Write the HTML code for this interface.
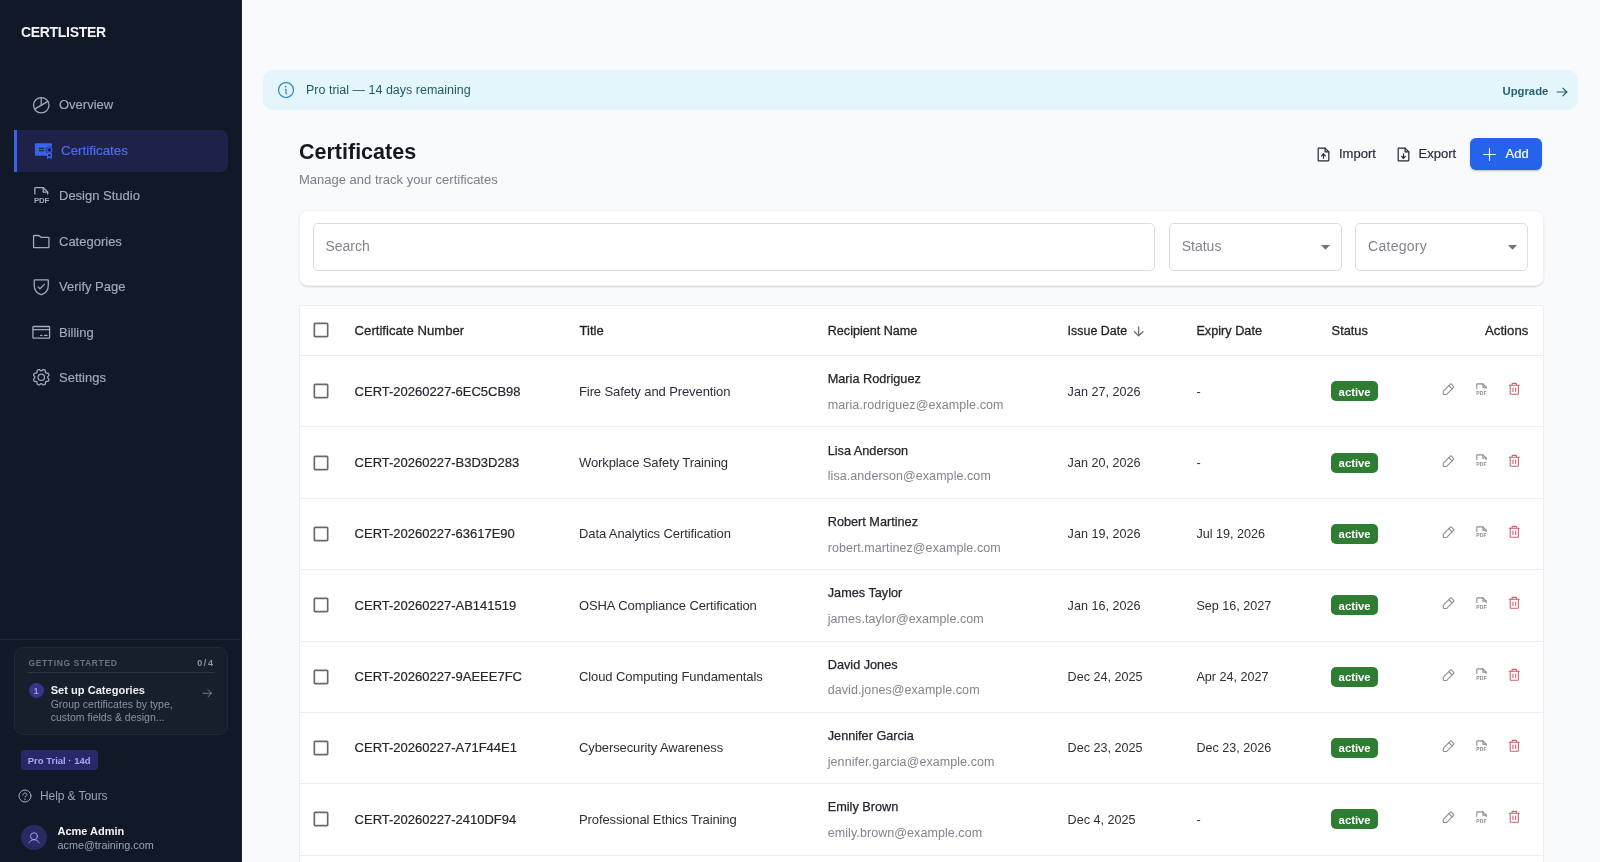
<!DOCTYPE html><html><head><meta charset="utf-8"><style>
*{box-sizing:border-box;margin:0;padding:0}
html,body{width:1600px;height:862px;overflow:hidden;background:#f8fafc;font-family:"Liberation Sans",sans-serif}
.t{position:absolute;line-height:1;white-space:nowrap}
#w{position:absolute;left:0;top:0;width:1600px;height:862px;will-change:transform}
.a{position:absolute}
svg{position:absolute;overflow:visible}
.med{-webkit-text-stroke:0.25px currentColor}
</style></head><body><div id="w">
<div class="a" style="left:0;top:0;width:242px;height:862px;background:#111827;border-right:1px solid #1c2333"></div>
<div class="t" style="left:21px;top:25px;font-size:14px;color:#f3f4f6;font-weight:700;letter-spacing:-0.32px">CERTLISTER</div>
<div class="a" style="left:14px;top:130px;width:214px;height:42px;background:#1e2249;border-radius:0 8px 8px 0;border-left:3px solid #3b63e8"></div>
<div class="t" style="left:59px;top:98px;font-size:13px;color:#a3aab8;font-weight:400;-webkit-text-stroke:0.15px #a3aab8">Overview</div>
<div class="t" style="left:61px;top:144px;font-size:13.4px;color:#4c6ef5;font-weight:400;-webkit-text-stroke:0.15px #4c6ef5">Certificates</div>
<div class="t" style="left:59px;top:189px;font-size:13px;color:#a3aab8;font-weight:400;-webkit-text-stroke:0.15px #a3aab8">Design Studio</div>
<div class="t" style="left:59px;top:235px;font-size:13px;color:#a3aab8;font-weight:400;-webkit-text-stroke:0.15px #a3aab8">Categories</div>
<div class="t" style="left:59px;top:280px;font-size:13px;color:#a3aab8;font-weight:400;-webkit-text-stroke:0.15px #a3aab8">Verify Page</div>
<div class="t" style="left:59px;top:326px;font-size:13px;color:#a3aab8;font-weight:400;-webkit-text-stroke:0.15px #a3aab8">Billing</div>
<div class="t" style="left:59px;top:371px;font-size:13px;color:#a3aab8;font-weight:400;-webkit-text-stroke:0.15px #a3aab8">Settings</div>
<svg style="left:31.25px;top:94.65px" width="20.5" height="20.5" viewBox="0 0 256 256" fill="none" stroke="#a3aab8" stroke-width="16" stroke-linecap="round" stroke-linejoin="round" ><circle cx="128" cy="128" r="96"/><line x1="128" y1="128" x2="128" y2="32"/><line x1="211.14" y1="80" x2="44.86" y2="176"/></svg>
<svg style="left:33.05px;top:140.05px" width="20.5" height="20.5" viewBox="0 0 256 256"><rect x="24" y="41" width="212" height="157" rx="12" fill="#3b63e8"/><path d="M80 104H132M80 133H132" stroke="#1e2249" stroke-width="15" stroke-linecap="round"/><circle cx="204" cy="126" r="46" fill="#1e2249"/><path d="M174 160V240L205 222L236 240V160Z" fill="#3b63e8"/><path d="M190 176V208L205 199L220 208V176Z" fill="#1e2249"/><circle cx="204" cy="124" r="31" fill="#1e2249" stroke="#3b63e8" stroke-width="14"/></svg><svg style="left:31.25px;top:185.45px" width="20.5" height="20.5" viewBox="0 0 256 256" fill="none" stroke="#a3aab8" stroke-width="16" stroke-linecap="round" stroke-linejoin="round" ><path d="M48,112V40a8,8,0,0,1,8-8h96l56,56v24"/><polyline points="152 32 152 88 208 88"/></svg>
<div class="t" style="left:34px;top:197px;font-size:7.8px;color:#a3aab8;font-weight:700;letter-spacing:-0.15px">PDF</div>
<svg style="left:31.25px;top:230.85px" width="20.5" height="20.5" viewBox="0 0 256 256" fill="none" stroke="#a3aab8" stroke-width="16" stroke-linecap="round" stroke-linejoin="round" ><path d="M216.89,208H39.38A7.4,7.4,0,0,1,32,200.62V64a8,8,0,0,1,8-8H93.33a8,8,0,0,1,4.8,1.6l27.74,20.8a8,8,0,0,0,4.8,1.6H216a8,8,0,0,1,8,8V200.89A7.11,7.11,0,0,1,216.89,208Z"/></svg>
<svg style="left:31.25px;top:276.25px" width="20.5" height="20.5" viewBox="0 0 256 256" fill="none" stroke="#a3aab8" stroke-width="16" stroke-linecap="round" stroke-linejoin="round" ><path d="M40,114.79V56a8,8,0,0,1,8-8H208a8,8,0,0,1,8,8v58.77c0,84.18-71.31,112.07-85.54,116.8a7.54,7.54,0,0,1-4.92,0C111.31,226.86,40,199,40,114.79Z"/><polyline points="88 136 112 160 168 104"/></svg>
<svg style="left:31.25px;top:321.65px" width="20.5" height="20.5" viewBox="0 0 256 256" fill="none" stroke="#a3aab8" stroke-width="16" stroke-linecap="round" stroke-linejoin="round" ><rect x="24" y="56" width="208" height="144" rx="8"/><line x1="168" y1="168" x2="200" y2="168"/><line x1="120" y1="168" x2="136" y2="168"/><line x1="24" y1="96" x2="232" y2="96"/></svg>
<svg style="left:31.25px;top:367.05px" width="20.5" height="20.5" viewBox="0 0 256 256" fill="none" stroke="#a3aab8" stroke-width="16" stroke-linecap="round" stroke-linejoin="round" ><circle cx="128" cy="128" r="40"/><path d="M41.43,178.09A99.14,99.14,0,0,1,31.36,153.8l16.78-21a81.59,81.59,0,0,1,0-9.64l-16.77-21a99.43,99.43,0,0,1,10.05-24.3l26.71-3a81,81,0,0,1,6.81-6.81l3-26.7A99.14,99.14,0,0,1,102.2,31.36l21,16.78a81.59,81.59,0,0,1,9.64,0l21-16.77a99.43,99.43,0,0,1,24.3,10.05l3,26.71a81,81,0,0,1,6.81,6.81l26.7,3a99.140,99.14,0,0,1,10.07,24.29l-16.78,21a81.59,81.59,0,0,1,0,9.64l16.77,21a99.43,99.43,0,0,1-10,24.3l-26.71,3a81,81,0,0,1-6.81,6.81l-3,26.7a99.14,99.14,0,0,1-24.3,10.07l-21-16.78a81.59,81.59,0,0,1-9.640,0l-21,16.77a99.43,99.43,0,0,1-24.3-10l-3-26.71a81,81,0,0,1-6.81-6.81Z"/></svg>
<div class="a" style="left:0;top:639px;width:241px;height:1px;background:#1f2637"></div>
<div class="a" style="left:14px;top:647px;width:214px;height:88px;background:#171e2c;border:1px solid #1f2737;border-radius:9px"></div>
<div class="t" style="left:28.5px;top:659px;font-size:8.5px;color:#6b7280;font-weight:700;letter-spacing:0.62px">GETTING STARTED</div>
<div class="t" style="right:1385.5px;top:659px;font-size:9px;color:#8b93a1;font-weight:700;letter-spacing:1.6px">0/4</div>
<div class="a" style="left:28px;top:672px;width:186px;height:1px;background:#2b3344"></div>
<div class="a" style="left:28.5px;top:683px;width:15px;height:15px;border-radius:50%;background:#35358a"></div>
<div class="t" style="left:33.4px;top:686px;font-size:9.5px;color:#a3a5f3;font-weight:400;-webkit-text-stroke:0.2px #a3a5f3">1</div>
<div class="t" style="left:50.7px;top:685px;font-size:11.1px;color:#eef0f4;font-weight:700;">Set up Categories</div>
<div class="t" style="left:50.7px;top:699px;font-size:10.5px;color:#8c93a0;font-weight:400;">Group certificates by type,</div>
<div class="t" style="left:50.7px;top:712px;font-size:10.5px;color:#8c93a0;font-weight:400;">custom fields &amp; design...</div>
<svg style="left:201.00px;top:686.90px" width="12.5" height="12.5" viewBox="0 0 256 256" fill="none" stroke="#8b93a1" stroke-width="16" stroke-linecap="round" stroke-linejoin="round" ><line x1="40" y1="128" x2="216" y2="128"/><polyline points="144 56 216 128 144 200"/></svg>
<div class="a" style="left:21px;top:750px;width:77px;height:20px;background:#29296a;border-radius:4px"></div>
<div class="t" style="left:27.7px;top:756px;font-size:9.5px;color:#a4a7f2;font-weight:700;">Pro Trial · 14d</div>
<svg style="left:17.30px;top:788.00px" width="16" height="16" viewBox="0 0 256 256" fill="none" stroke="#a3aab8" stroke-width="16" stroke-linecap="round" stroke-linejoin="round" color="#a3aab8"><circle cx="128" cy="128" r="96"/><circle cx="128" cy="180" r="12" fill="currentColor" stroke="none"/><path d="M128,144v-8c17.67,0,32-12.54,32-28s-14.33-28-32-28S96,92.54,96,108v4"/></svg>
<div class="t" style="left:40px;top:790px;font-size:12px;color:#9ca3af;font-weight:400;letter-spacing:-0.08px">Help &amp; Tours</div>
<div class="a" style="left:21px;top:824.7px;width:25.5px;height:25.5px;border-radius:50%;background:#292a62"></div>
<svg style="left:26.65px;top:830.70px" width="14" height="14" viewBox="0 0 256 256" fill="none" stroke="#a9abf6" stroke-width="16" stroke-linecap="round" stroke-linejoin="round" ><circle cx="128" cy="96" r="64"/><path d="M32,216c19.37-33.47,54.55-56,96-56s76.63,22.53,96,56"/></svg>
<div class="t" style="left:57.5px;top:826px;font-size:11px;color:#f3f4f6;font-weight:700;">Acme Admin</div>
<div class="t" style="left:57.5px;top:840px;font-size:10.8px;color:#9ca3af;font-weight:400;">acme@training.com</div>
<div class="a" style="left:263px;top:70px;width:1315px;height:40px;background:#e4f6fc;border-radius:10px"></div>
<svg style="left:275.50px;top:80.00px" width="20" height="20" viewBox="0 0 256 256" fill="none" stroke="#2f8bc9" stroke-width="16" stroke-linecap="round" stroke-linejoin="round" color="#2f8bc9"><circle cx="128" cy="128" r="96"/><path d="M120,120a8,8,0,0,1,8,8v40a8,8,0,0,0,8,8"/><circle cx="124" cy="84" r="12" fill="currentColor" stroke="none"/></svg>
<div class="t" style="left:306px;top:84px;font-size:12.5px;color:#1d5b6b;font-weight:400;">Pro trial — 14 days remaining</div>
<div class="t" style="left:1502.5px;top:86px;font-size:11.3px;color:#24606f;font-weight:700;">Upgrade</div>
<svg style="left:1555.20px;top:84.50px" width="14" height="14" viewBox="0 0 256 256" fill="none" stroke="#1f5d6d" stroke-width="22" stroke-linecap="round" stroke-linejoin="round" ><line x1="40" y1="128" x2="216" y2="128"/><polyline points="144 56 216 128 144 200"/></svg>
<div class="t" style="left:299px;top:142px;font-size:21.5px;color:#15191f;font-weight:700;">Certificates</div>
<div class="t" style="left:299px;top:173px;font-size:13px;color:#7a808a;font-weight:400;">Manage and track your certificates</div>
<svg style="left:1314.50px;top:146.00px" width="17.0" height="17.0" viewBox="0 0 256 256" fill="none" stroke="#1f2937" stroke-width="18" stroke-linecap="round" stroke-linejoin="round" ><path d="M200,224H56a8,8,0,0,1-8-8V40a8,8,0,0,1,8-8h96l56,56V216A8,8,0,0,1,200,224Z"/><polyline points="152 32 152 88 208 88"/><polyline points="100 148 128 120 156 148"/><line x1="128" y1="184" x2="128" y2="120"/></svg>
<div class="t" style="left:1339px;top:147px;font-size:13px;color:#1f2937;font-weight:400;-webkit-text-stroke:0.2px #1f2937">Import</div>
<svg style="left:1394.50px;top:146.00px" width="17.0" height="17.0" viewBox="0 0 256 256" fill="none" stroke="#1f2937" stroke-width="18" stroke-linecap="round" stroke-linejoin="round" ><path d="M200,224H56a8,8,0,0,1-8-8V40a8,8,0,0,1,8-8h96l56,56V216A8,8,0,0,1,200,224Z"/><polyline points="152 32 152 88 208 88"/><polyline points="100 156 128 184 156 156"/><line x1="128" y1="120" x2="128" y2="184"/></svg>
<div class="t" style="left:1418.6px;top:147px;font-size:13px;color:#1f2937;font-weight:400;-webkit-text-stroke:0.2px #1f2937">Export</div>
<div class="a" style="left:1470px;top:138.3px;width:72px;height:31.5px;background:#2563eb;border-radius:6px;box-shadow:0 2px 2px -1px rgba(0,0,0,0.18),0 1px 3px rgba(0,0,0,0.10)"></div>
<svg style="left:1480.80px;top:145.70px" width="17" height="17" viewBox="0 0 256 256" fill="none" stroke="#ffffff" stroke-width="17" stroke-linecap="round" stroke-linejoin="round" ><line x1="40" y1="128" x2="216" y2="128"/><line x1="128" y1="40" x2="128" y2="216"/></svg>
<div class="t" style="left:1505.6px;top:147px;font-size:13px;color:#ffffff;font-weight:400;-webkit-text-stroke:0.2px #fff">Add</div>
<div class="a" style="left:298.5px;top:209.5px;width:1245px;height:76px;background:#fff;border:1px solid #eff1f3;border-radius:9px;box-shadow:0 2px 2px -1px rgba(0,0,0,0.10),0 1px 3px rgba(0,0,0,0.06)"></div>
<div class="a" style="left:313px;top:223px;width:842px;height:48px;border:1px solid #dadde1;border-radius:5px"></div>
<div class="t" style="left:325.4px;top:239px;font-size:14px;color:#80858c;font-weight:400;">Search</div>
<div class="a" style="left:1169px;top:223px;width:173px;height:48px;border:1px solid #dadde1;border-radius:5px"></div>
<div class="t" style="left:1181.7px;top:239px;font-size:14px;color:#80858c;font-weight:400;">Status</div>
<svg style="left:1321px;top:245px" width="9" height="5" viewBox="0 0 9 5"><path d="M0 0h9L4.5 4.8z" fill="#707479"/></svg>
<div class="a" style="left:1355px;top:223px;width:173px;height:48px;border:1px solid #dadde1;border-radius:5px"></div>
<div class="t" style="left:1368px;top:239px;font-size:14px;color:#80858c;font-weight:400;letter-spacing:0.28px">Category</div>
<svg style="left:1507.5px;top:245px" width="9" height="5" viewBox="0 0 9 5"><path d="M0 0h9L4.5 4.8z" fill="#707479"/></svg>
<div class="a" style="left:298.5px;top:305px;width:1245px;height:600px;background:#fff;border:1px solid #eceef1;border-radius:2px"></div>
<svg style="left:310.5px;top:320.30px" width="20" height="20" viewBox="0 0 24 24"><path d="M19 5v14H5V5h14m0-2H5c-1.11 0-2 .9-2 2v14c0 1.1.89 2 2 2h14c1.1 0 2-.9 2-2V5c0-1.1-.9-2-2-2z" fill="#656a72"/></svg>
<div class="t" style="left:354.6px;top:324px;font-size:13.15px;color:#1f2328;font-weight:400;-webkit-text-stroke:0.3px #1f2328">Certificate Number</div>
<div class="t" style="left:579.6px;top:324px;font-size:13px;color:#1f2328;font-weight:400;-webkit-text-stroke:0.3px #1f2328">Title</div>
<div class="t" style="left:827.75px;top:325px;font-size:12.6px;color:#1f2328;font-weight:400;-webkit-text-stroke:0.3px #1f2328">Recipient Name</div>
<div class="t" style="left:1067.6px;top:325px;font-size:12.45px;color:#1f2328;font-weight:400;-webkit-text-stroke:0.3px #1f2328">Issue Date</div>
<div class="t" style="left:1196.4px;top:325px;font-size:12.7px;color:#1f2328;font-weight:400;-webkit-text-stroke:0.3px #1f2328">Expiry Date</div>
<div class="t" style="left:1331.6px;top:325px;font-size:12.8px;color:#1f2328;font-weight:400;-webkit-text-stroke:0.3px #1f2328">Status</div>
<div class="t" style="right:71.70000000000005px;top:324px;font-size:13.2px;color:#1f2328;font-weight:400;-webkit-text-stroke:0.3px #1f2328">Actions</div>
<svg style="left:1131.35px;top:323.5px" width="15.3" height="15.3" viewBox="0 0 24 24"><path d="M20 12l-1.41-1.41L13 16.17V4h-2v12.17l-5.58-5.59L4 12l8 8 8-8z" fill="#6b6f76"/></svg>
<div class="a" style="left:299px;top:355.0px;width:1244px;height:1px;background:#eceef1"></div>
<svg style="left:310.5px;top:381.30px" width="20" height="20" viewBox="0 0 24 24"><path d="M19 5v14H5V5h14m0-2H5c-1.11 0-2 .9-2 2v14c0 1.1.89 2 2 2h14c1.1 0 2-.9 2-2V5c0-1.1-.9-2-2-2z" fill="#656a72"/></svg>
<div class="t" style="left:354.6px;top:385px;font-size:13px;color:#23272e;font-weight:400;-webkit-text-stroke:0.2px #23272e">CERT-20260227-6EC5CB98</div>
<div class="t" style="left:579.0px;top:385px;font-size:13px;color:#2b3038;font-weight:400;letter-spacing:-0.1px">Fire Safety and Prevention</div>
<div class="t" style="left:827.75px;top:373px;font-size:12.7px;color:#23272e;font-weight:400;-webkit-text-stroke:0.25px #23272e">Maria Rodriguez</div>
<div class="t" style="left:827.75px;top:399px;font-size:12.5px;color:#80858e;font-weight:400;letter-spacing:0.07px">maria.rodriguez@example.com</div>
<div class="t" style="left:1067.6px;top:386px;font-size:12.6px;color:#2b3038;font-weight:400;">Jan 27, 2026</div>
<div class="t" style="left:1196.4px;top:386px;font-size:12.6px;color:#2b3038;font-weight:400;">-</div>
<div class="a" style="left:1331px;top:381.3px;width:47px;height:20px;background:#2e7d32;border-radius:5px"></div>
<div class="t" style="left:1338.6px;top:387px;font-size:11.3px;color:#ffffff;font-weight:700;">active</div>
<svg style="left:1441.20px;top:382.20px" width="14.8" height="14.8" viewBox="0 0 256 256" fill="none" stroke="#8a8f96" stroke-width="19" stroke-linecap="round" stroke-linejoin="round" ><path d="M92.69,216H48a8,8,0,0,1-8-8V163.31a8,8,0,0,1,2.34-5.65L165.66,34.34a8,8,0,0,1,11.31,0L221.66,79a8,8,0,0,1,0,11.31L98.34,213.66A8,8,0,0,1,92.69,216Z"/><line x1="136" y1="64" x2="192" y2="120"/></svg>
<svg style="left:1474.00px;top:382.00px" width="15" height="15" viewBox="0 0 256 256" fill="none" stroke="#8a8f96" stroke-width="19" stroke-linecap="round" stroke-linejoin="round" ><path d="M48,112V40a8,8,0,0,1,8-8h96l56,56v24"/><polyline points="152 32 152 88 208 88"/></svg>
<div class="t" style="left:1476.2px;top:391px;font-size:5px;color:#8a8f96;font-weight:700;letter-spacing:0.2px">PDF</div>
<svg style="left:1507.10px;top:382.30px" width="14.6" height="14.6" viewBox="0 0 256 256" fill="none" stroke="#d2606f" stroke-width="19" stroke-linecap="round" stroke-linejoin="round" ><line x1="216" y1="56" x2="40" y2="56"/><line x1="104" y1="104" x2="104" y2="168"/><line x1="152" y1="104" x2="152" y2="168"/><path d="M200,56V208a8,8,0,0,1-8,8H64a8,8,0,0,1-8-8V56"/><path d="M168,56V40a16,16,0,0,0-16-16H104A16,16,0,0,0,88,40V56"/></svg>
<div class="a" style="left:299px;top:426.4px;width:1244px;height:1px;background:#eceef1"></div>
<svg style="left:310.5px;top:452.63px" width="20" height="20" viewBox="0 0 24 24"><path d="M19 5v14H5V5h14m0-2H5c-1.11 0-2 .9-2 2v14c0 1.1.89 2 2 2h14c1.1 0 2-.9 2-2V5c0-1.1-.9-2-2-2z" fill="#656a72"/></svg>
<div class="t" style="left:354.6px;top:456px;font-size:13px;color:#23272e;font-weight:400;-webkit-text-stroke:0.2px #23272e">CERT-20260227-B3D3D283</div>
<div class="t" style="left:579.0px;top:456px;font-size:13px;color:#2b3038;font-weight:400;letter-spacing:-0.1px">Workplace Safety Training</div>
<div class="t" style="left:827.75px;top:445px;font-size:12.7px;color:#23272e;font-weight:400;-webkit-text-stroke:0.25px #23272e">Lisa Anderson</div>
<div class="t" style="left:827.75px;top:470px;font-size:12.5px;color:#80858e;font-weight:400;letter-spacing:0.07px">lisa.anderson@example.com</div>
<div class="t" style="left:1067.6px;top:457px;font-size:12.6px;color:#2b3038;font-weight:400;">Jan 20, 2026</div>
<div class="t" style="left:1196.4px;top:457px;font-size:12.6px;color:#2b3038;font-weight:400;">-</div>
<div class="a" style="left:1331px;top:452.6px;width:47px;height:20px;background:#2e7d32;border-radius:5px"></div>
<div class="t" style="left:1338.6px;top:458px;font-size:11.3px;color:#ffffff;font-weight:700;">active</div>
<svg style="left:1441.20px;top:453.53px" width="14.8" height="14.8" viewBox="0 0 256 256" fill="none" stroke="#8a8f96" stroke-width="19" stroke-linecap="round" stroke-linejoin="round" ><path d="M92.69,216H48a8,8,0,0,1-8-8V163.31a8,8,0,0,1,2.34-5.65L165.66,34.34a8,8,0,0,1,11.31,0L221.66,79a8,8,0,0,1,0,11.31L98.34,213.66A8,8,0,0,1,92.69,216Z"/><line x1="136" y1="64" x2="192" y2="120"/></svg>
<svg style="left:1474.00px;top:453.33px" width="15" height="15" viewBox="0 0 256 256" fill="none" stroke="#8a8f96" stroke-width="19" stroke-linecap="round" stroke-linejoin="round" ><path d="M48,112V40a8,8,0,0,1,8-8h96l56,56v24"/><polyline points="152 32 152 88 208 88"/></svg>
<div class="t" style="left:1476.2px;top:462px;font-size:5px;color:#8a8f96;font-weight:700;letter-spacing:0.2px">PDF</div>
<svg style="left:1507.10px;top:453.63px" width="14.6" height="14.6" viewBox="0 0 256 256" fill="none" stroke="#d2606f" stroke-width="19" stroke-linecap="round" stroke-linejoin="round" ><line x1="216" y1="56" x2="40" y2="56"/><line x1="104" y1="104" x2="104" y2="168"/><line x1="152" y1="104" x2="152" y2="168"/><path d="M200,56V208a8,8,0,0,1-8,8H64a8,8,0,0,1-8-8V56"/><path d="M168,56V40a16,16,0,0,0-16-16H104A16,16,0,0,0,88,40V56"/></svg>
<div class="a" style="left:299px;top:497.8px;width:1244px;height:1px;background:#eceef1"></div>
<svg style="left:310.5px;top:523.96px" width="20" height="20" viewBox="0 0 24 24"><path d="M19 5v14H5V5h14m0-2H5c-1.11 0-2 .9-2 2v14c0 1.1.89 2 2 2h14c1.1 0 2-.9 2-2V5c0-1.1-.9-2-2-2z" fill="#656a72"/></svg>
<div class="t" style="left:354.6px;top:527px;font-size:13px;color:#23272e;font-weight:400;-webkit-text-stroke:0.2px #23272e">CERT-20260227-63617E90</div>
<div class="t" style="left:579.0px;top:527px;font-size:13px;color:#2b3038;font-weight:400;letter-spacing:-0.1px">Data Analytics Certification</div>
<div class="t" style="left:827.75px;top:516px;font-size:12.7px;color:#23272e;font-weight:400;-webkit-text-stroke:0.25px #23272e">Robert Martinez</div>
<div class="t" style="left:827.75px;top:542px;font-size:12.5px;color:#80858e;font-weight:400;letter-spacing:0.07px">robert.martinez@example.com</div>
<div class="t" style="left:1067.6px;top:528px;font-size:12.6px;color:#2b3038;font-weight:400;">Jan 19, 2026</div>
<div class="t" style="left:1196.4px;top:528px;font-size:12.6px;color:#2b3038;font-weight:400;">Jul 19, 2026</div>
<div class="a" style="left:1331px;top:524.0px;width:47px;height:20px;background:#2e7d32;border-radius:5px"></div>
<div class="t" style="left:1338.6px;top:529px;font-size:11.3px;color:#ffffff;font-weight:700;">active</div>
<svg style="left:1441.20px;top:524.86px" width="14.8" height="14.8" viewBox="0 0 256 256" fill="none" stroke="#8a8f96" stroke-width="19" stroke-linecap="round" stroke-linejoin="round" ><path d="M92.69,216H48a8,8,0,0,1-8-8V163.31a8,8,0,0,1,2.34-5.65L165.66,34.34a8,8,0,0,1,11.31,0L221.66,79a8,8,0,0,1,0,11.31L98.34,213.66A8,8,0,0,1,92.69,216Z"/><line x1="136" y1="64" x2="192" y2="120"/></svg>
<svg style="left:1474.00px;top:524.66px" width="15" height="15" viewBox="0 0 256 256" fill="none" stroke="#8a8f96" stroke-width="19" stroke-linecap="round" stroke-linejoin="round" ><path d="M48,112V40a8,8,0,0,1,8-8h96l56,56v24"/><polyline points="152 32 152 88 208 88"/></svg>
<div class="t" style="left:1476.2px;top:533px;font-size:5px;color:#8a8f96;font-weight:700;letter-spacing:0.2px">PDF</div>
<svg style="left:1507.10px;top:524.96px" width="14.6" height="14.6" viewBox="0 0 256 256" fill="none" stroke="#d2606f" stroke-width="19" stroke-linecap="round" stroke-linejoin="round" ><line x1="216" y1="56" x2="40" y2="56"/><line x1="104" y1="104" x2="104" y2="168"/><line x1="152" y1="104" x2="152" y2="168"/><path d="M200,56V208a8,8,0,0,1-8,8H64a8,8,0,0,1-8-8V56"/><path d="M168,56V40a16,16,0,0,0-16-16H104A16,16,0,0,0,88,40V56"/></svg>
<div class="a" style="left:299px;top:569.2px;width:1244px;height:1px;background:#eceef1"></div>
<svg style="left:310.5px;top:595.29px" width="20" height="20" viewBox="0 0 24 24"><path d="M19 5v14H5V5h14m0-2H5c-1.11 0-2 .9-2 2v14c0 1.1.89 2 2 2h14c1.1 0 2-.9 2-2V5c0-1.1-.9-2-2-2z" fill="#656a72"/></svg>
<div class="t" style="left:354.6px;top:599px;font-size:13px;color:#23272e;font-weight:400;-webkit-text-stroke:0.2px #23272e">CERT-20260227-AB141519</div>
<div class="t" style="left:579.0px;top:599px;font-size:13px;color:#2b3038;font-weight:400;letter-spacing:-0.1px">OSHA Compliance Certification</div>
<div class="t" style="left:827.75px;top:587px;font-size:12.7px;color:#23272e;font-weight:400;-webkit-text-stroke:0.25px #23272e">James Taylor</div>
<div class="t" style="left:827.75px;top:613px;font-size:12.5px;color:#80858e;font-weight:400;letter-spacing:0.07px">james.taylor@example.com</div>
<div class="t" style="left:1067.6px;top:600px;font-size:12.6px;color:#2b3038;font-weight:400;">Jan 16, 2026</div>
<div class="t" style="left:1196.4px;top:600px;font-size:12.6px;color:#2b3038;font-weight:400;">Sep 16, 2027</div>
<div class="a" style="left:1331px;top:595.3px;width:47px;height:20px;background:#2e7d32;border-radius:5px"></div>
<div class="t" style="left:1338.6px;top:601px;font-size:11.3px;color:#ffffff;font-weight:700;">active</div>
<svg style="left:1441.20px;top:596.19px" width="14.8" height="14.8" viewBox="0 0 256 256" fill="none" stroke="#8a8f96" stroke-width="19" stroke-linecap="round" stroke-linejoin="round" ><path d="M92.69,216H48a8,8,0,0,1-8-8V163.31a8,8,0,0,1,2.34-5.65L165.66,34.34a8,8,0,0,1,11.31,0L221.66,79a8,8,0,0,1,0,11.31L98.34,213.66A8,8,0,0,1,92.69,216Z"/><line x1="136" y1="64" x2="192" y2="120"/></svg>
<svg style="left:1474.00px;top:595.99px" width="15" height="15" viewBox="0 0 256 256" fill="none" stroke="#8a8f96" stroke-width="19" stroke-linecap="round" stroke-linejoin="round" ><path d="M48,112V40a8,8,0,0,1,8-8h96l56,56v24"/><polyline points="152 32 152 88 208 88"/></svg>
<div class="t" style="left:1476.2px;top:605px;font-size:5px;color:#8a8f96;font-weight:700;letter-spacing:0.2px">PDF</div>
<svg style="left:1507.10px;top:596.29px" width="14.6" height="14.6" viewBox="0 0 256 256" fill="none" stroke="#d2606f" stroke-width="19" stroke-linecap="round" stroke-linejoin="round" ><line x1="216" y1="56" x2="40" y2="56"/><line x1="104" y1="104" x2="104" y2="168"/><line x1="152" y1="104" x2="152" y2="168"/><path d="M200,56V208a8,8,0,0,1-8,8H64a8,8,0,0,1-8-8V56"/><path d="M168,56V40a16,16,0,0,0-16-16H104A16,16,0,0,0,88,40V56"/></svg>
<div class="a" style="left:299px;top:640.6px;width:1244px;height:1px;background:#eceef1"></div>
<svg style="left:310.5px;top:666.62px" width="20" height="20" viewBox="0 0 24 24"><path d="M19 5v14H5V5h14m0-2H5c-1.11 0-2 .9-2 2v14c0 1.1.89 2 2 2h14c1.1 0 2-.9 2-2V5c0-1.1-.9-2-2-2z" fill="#656a72"/></svg>
<div class="t" style="left:354.6px;top:670px;font-size:13px;color:#23272e;font-weight:400;-webkit-text-stroke:0.2px #23272e">CERT-20260227-9AEEE7FC</div>
<div class="t" style="left:579.0px;top:670px;font-size:13px;color:#2b3038;font-weight:400;letter-spacing:-0.1px">Cloud Computing Fundamentals</div>
<div class="t" style="left:827.75px;top:659px;font-size:12.7px;color:#23272e;font-weight:400;-webkit-text-stroke:0.25px #23272e">David Jones</div>
<div class="t" style="left:827.75px;top:684px;font-size:12.5px;color:#80858e;font-weight:400;letter-spacing:0.07px">david.jones@example.com</div>
<div class="t" style="left:1067.6px;top:671px;font-size:12.6px;color:#2b3038;font-weight:400;">Dec 24, 2025</div>
<div class="t" style="left:1196.4px;top:671px;font-size:12.6px;color:#2b3038;font-weight:400;">Apr 24, 2027</div>
<div class="a" style="left:1331px;top:666.6px;width:47px;height:20px;background:#2e7d32;border-radius:5px"></div>
<div class="t" style="left:1338.6px;top:672px;font-size:11.3px;color:#ffffff;font-weight:700;">active</div>
<svg style="left:1441.20px;top:667.52px" width="14.8" height="14.8" viewBox="0 0 256 256" fill="none" stroke="#8a8f96" stroke-width="19" stroke-linecap="round" stroke-linejoin="round" ><path d="M92.69,216H48a8,8,0,0,1-8-8V163.31a8,8,0,0,1,2.34-5.65L165.66,34.34a8,8,0,0,1,11.31,0L221.66,79a8,8,0,0,1,0,11.31L98.34,213.66A8,8,0,0,1,92.69,216Z"/><line x1="136" y1="64" x2="192" y2="120"/></svg>
<svg style="left:1474.00px;top:667.32px" width="15" height="15" viewBox="0 0 256 256" fill="none" stroke="#8a8f96" stroke-width="19" stroke-linecap="round" stroke-linejoin="round" ><path d="M48,112V40a8,8,0,0,1,8-8h96l56,56v24"/><polyline points="152 32 152 88 208 88"/></svg>
<div class="t" style="left:1476.2px;top:676px;font-size:5px;color:#8a8f96;font-weight:700;letter-spacing:0.2px">PDF</div>
<svg style="left:1507.10px;top:667.62px" width="14.6" height="14.6" viewBox="0 0 256 256" fill="none" stroke="#d2606f" stroke-width="19" stroke-linecap="round" stroke-linejoin="round" ><line x1="216" y1="56" x2="40" y2="56"/><line x1="104" y1="104" x2="104" y2="168"/><line x1="152" y1="104" x2="152" y2="168"/><path d="M200,56V208a8,8,0,0,1-8,8H64a8,8,0,0,1-8-8V56"/><path d="M168,56V40a16,16,0,0,0-16-16H104A16,16,0,0,0,88,40V56"/></svg>
<div class="a" style="left:299px;top:712.0px;width:1244px;height:1px;background:#eceef1"></div>
<svg style="left:310.5px;top:737.95px" width="20" height="20" viewBox="0 0 24 24"><path d="M19 5v14H5V5h14m0-2H5c-1.11 0-2 .9-2 2v14c0 1.1.89 2 2 2h14c1.1 0 2-.9 2-2V5c0-1.1-.9-2-2-2z" fill="#656a72"/></svg>
<div class="t" style="left:354.6px;top:741px;font-size:13px;color:#23272e;font-weight:400;-webkit-text-stroke:0.2px #23272e">CERT-20260227-A71F44E1</div>
<div class="t" style="left:579.0px;top:741px;font-size:13px;color:#2b3038;font-weight:400;letter-spacing:-0.1px">Cybersecurity Awareness</div>
<div class="t" style="left:827.75px;top:730px;font-size:12.7px;color:#23272e;font-weight:400;-webkit-text-stroke:0.25px #23272e">Jennifer Garcia</div>
<div class="t" style="left:827.75px;top:756px;font-size:12.5px;color:#80858e;font-weight:400;letter-spacing:0.07px">jennifer.garcia@example.com</div>
<div class="t" style="left:1067.6px;top:742px;font-size:12.6px;color:#2b3038;font-weight:400;">Dec 23, 2025</div>
<div class="t" style="left:1196.4px;top:742px;font-size:12.6px;color:#2b3038;font-weight:400;">Dec 23, 2026</div>
<div class="a" style="left:1331px;top:738.0px;width:47px;height:20px;background:#2e7d32;border-radius:5px"></div>
<div class="t" style="left:1338.6px;top:743px;font-size:11.3px;color:#ffffff;font-weight:700;">active</div>
<svg style="left:1441.20px;top:738.85px" width="14.8" height="14.8" viewBox="0 0 256 256" fill="none" stroke="#8a8f96" stroke-width="19" stroke-linecap="round" stroke-linejoin="round" ><path d="M92.69,216H48a8,8,0,0,1-8-8V163.31a8,8,0,0,1,2.34-5.65L165.66,34.34a8,8,0,0,1,11.31,0L221.66,79a8,8,0,0,1,0,11.31L98.34,213.66A8,8,0,0,1,92.69,216Z"/><line x1="136" y1="64" x2="192" y2="120"/></svg>
<svg style="left:1474.00px;top:738.65px" width="15" height="15" viewBox="0 0 256 256" fill="none" stroke="#8a8f96" stroke-width="19" stroke-linecap="round" stroke-linejoin="round" ><path d="M48,112V40a8,8,0,0,1,8-8h96l56,56v24"/><polyline points="152 32 152 88 208 88"/></svg>
<div class="t" style="left:1476.2px;top:747px;font-size:5px;color:#8a8f96;font-weight:700;letter-spacing:0.2px">PDF</div>
<svg style="left:1507.10px;top:738.95px" width="14.6" height="14.6" viewBox="0 0 256 256" fill="none" stroke="#d2606f" stroke-width="19" stroke-linecap="round" stroke-linejoin="round" ><line x1="216" y1="56" x2="40" y2="56"/><line x1="104" y1="104" x2="104" y2="168"/><line x1="152" y1="104" x2="152" y2="168"/><path d="M200,56V208a8,8,0,0,1-8,8H64a8,8,0,0,1-8-8V56"/><path d="M168,56V40a16,16,0,0,0-16-16H104A16,16,0,0,0,88,40V56"/></svg>
<div class="a" style="left:299px;top:783.4px;width:1244px;height:1px;background:#eceef1"></div>
<svg style="left:310.5px;top:809.28px" width="20" height="20" viewBox="0 0 24 24"><path d="M19 5v14H5V5h14m0-2H5c-1.11 0-2 .9-2 2v14c0 1.1.89 2 2 2h14c1.1 0 2-.9 2-2V5c0-1.1-.9-2-2-2z" fill="#656a72"/></svg>
<div class="t" style="left:354.6px;top:813px;font-size:13px;color:#23272e;font-weight:400;-webkit-text-stroke:0.2px #23272e">CERT-20260227-2410DF94</div>
<div class="t" style="left:579.0px;top:813px;font-size:13px;color:#2b3038;font-weight:400;letter-spacing:-0.1px">Professional Ethics Training</div>
<div class="t" style="left:827.75px;top:801px;font-size:12.7px;color:#23272e;font-weight:400;-webkit-text-stroke:0.25px #23272e">Emily Brown</div>
<div class="t" style="left:827.75px;top:827px;font-size:12.5px;color:#80858e;font-weight:400;letter-spacing:0.07px">emily.brown@example.com</div>
<div class="t" style="left:1067.6px;top:814px;font-size:12.6px;color:#2b3038;font-weight:400;">Dec 4, 2025</div>
<div class="t" style="left:1196.4px;top:814px;font-size:12.6px;color:#2b3038;font-weight:400;">-</div>
<div class="a" style="left:1331px;top:809.3px;width:47px;height:20px;background:#2e7d32;border-radius:5px"></div>
<div class="t" style="left:1338.6px;top:815px;font-size:11.3px;color:#ffffff;font-weight:700;">active</div>
<svg style="left:1441.20px;top:810.18px" width="14.8" height="14.8" viewBox="0 0 256 256" fill="none" stroke="#8a8f96" stroke-width="19" stroke-linecap="round" stroke-linejoin="round" ><path d="M92.69,216H48a8,8,0,0,1-8-8V163.31a8,8,0,0,1,2.34-5.65L165.66,34.34a8,8,0,0,1,11.31,0L221.66,79a8,8,0,0,1,0,11.31L98.34,213.66A8,8,0,0,1,92.69,216Z"/><line x1="136" y1="64" x2="192" y2="120"/></svg>
<svg style="left:1474.00px;top:809.98px" width="15" height="15" viewBox="0 0 256 256" fill="none" stroke="#8a8f96" stroke-width="19" stroke-linecap="round" stroke-linejoin="round" ><path d="M48,112V40a8,8,0,0,1,8-8h96l56,56v24"/><polyline points="152 32 152 88 208 88"/></svg>
<div class="t" style="left:1476.2px;top:819px;font-size:5px;color:#8a8f96;font-weight:700;letter-spacing:0.2px">PDF</div>
<svg style="left:1507.10px;top:810.28px" width="14.6" height="14.6" viewBox="0 0 256 256" fill="none" stroke="#d2606f" stroke-width="19" stroke-linecap="round" stroke-linejoin="round" ><line x1="216" y1="56" x2="40" y2="56"/><line x1="104" y1="104" x2="104" y2="168"/><line x1="152" y1="104" x2="152" y2="168"/><path d="M200,56V208a8,8,0,0,1-8,8H64a8,8,0,0,1-8-8V56"/><path d="M168,56V40a16,16,0,0,0-16-16H104A16,16,0,0,0,88,40V56"/></svg>
<div class="a" style="left:299px;top:854.8px;width:1244px;height:1px;background:#eceef1"></div>
</div></body></html>
